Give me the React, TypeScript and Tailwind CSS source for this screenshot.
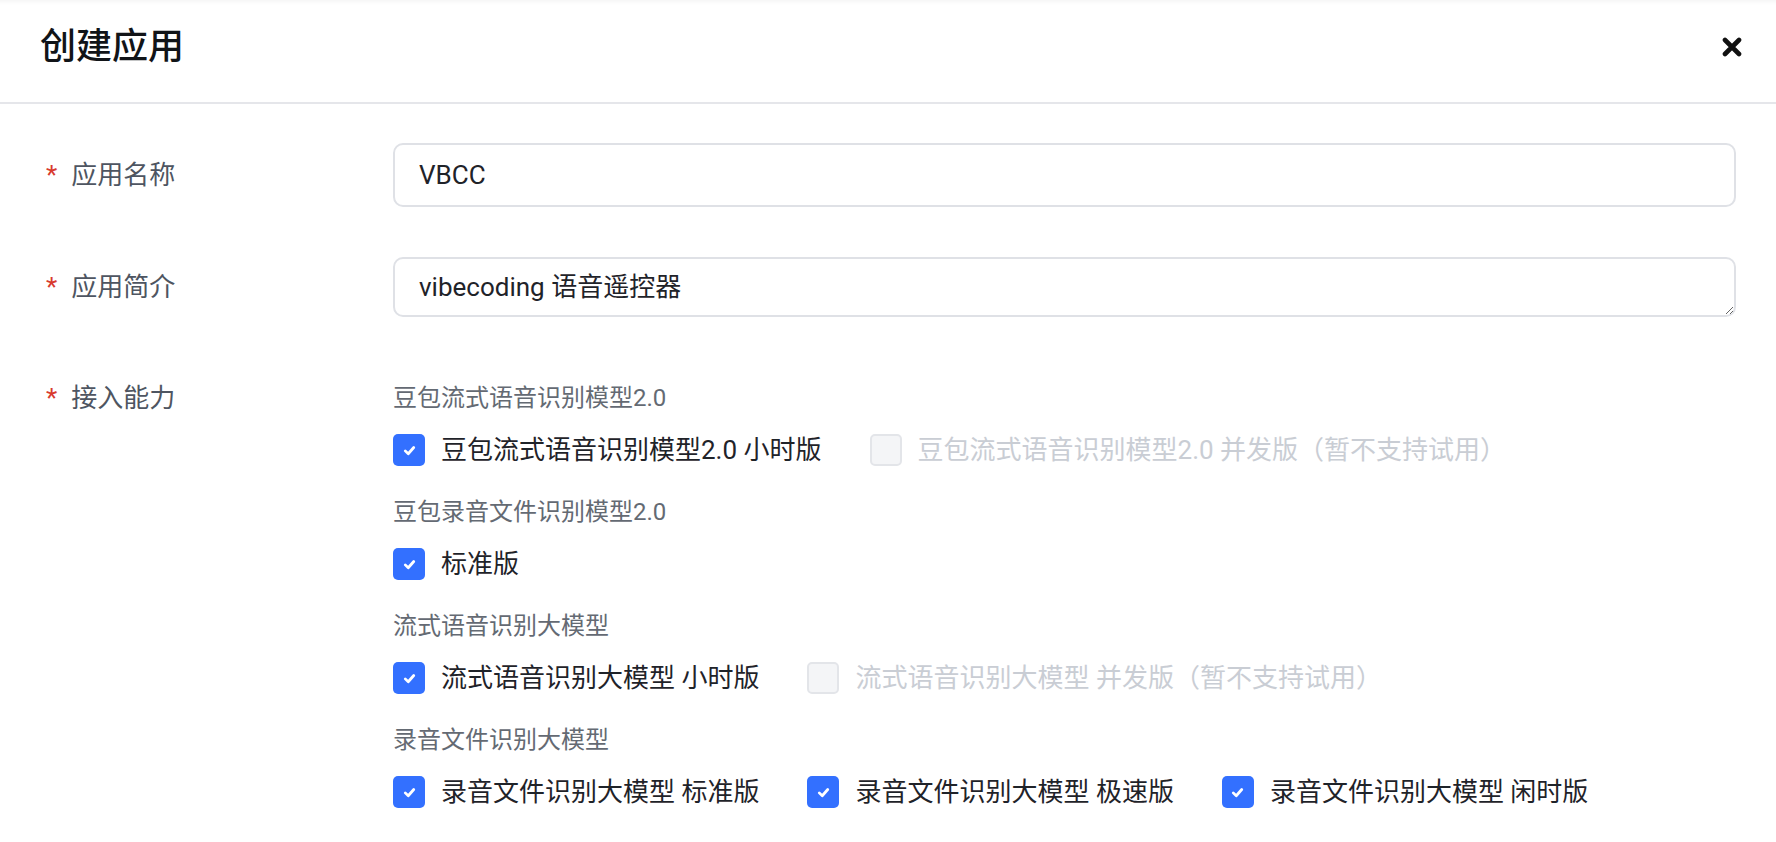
import { useState } from 'react'

type Option = { label: string; checked?: boolean; disabled?: boolean }
type Group = { title: string; options: Option[] }

const initialGroups: Group[] = [
  {
    title: '豆包流式语音识别模型2.0',
    options: [
      { label: '豆包流式语音识别模型2.0 小时版', checked: true },
      { label: '豆包流式语音识别模型2.0 并发版（暂不支持试用）', disabled: true }
    ]
  },
  {
    title: '豆包录音文件识别模型2.0',
    options: [{ label: '标准版', checked: true }]
  },
  {
    title: '流式语音识别大模型',
    options: [
      { label: '流式语音识别大模型 小时版', checked: true },
      { label: '流式语音识别大模型 并发版（暂不支持试用）', disabled: true }
    ]
  },
  {
    title: '录音文件识别大模型',
    options: [
      { label: '录音文件识别大模型 标准版', checked: true },
      { label: '录音文件识别大模型 极速版', checked: true },
      { label: '录音文件识别大模型 闲时版', checked: true }
    ]
  }
]

function CheckBox({ opt, onToggle }: { opt: Option; onToggle: () => void }) {
  return (
    <label className={['flex items-center gap-4 h-10', opt.disabled ? 'cursor-not-allowed' : 'cursor-pointer'].join(' ')}>
      <span
        onClick={opt.disabled ? undefined : onToggle}
        className={[
          'w-8 h-8 rounded-[5px] flex items-center justify-center shrink-0',
          opt.disabled
            ? 'bg-[#f4f5f7] border-2 border-[#e3e5e9]'
            : opt.checked
              ? 'bg-[#3370ff]'
              : 'bg-white border-2 border-[#d0d3d9]'
        ].join(' ')}
      >
        {opt.checked && !opt.disabled && (
          <svg width="15" height="15" viewBox="0 0 12 12" fill="none">
            <path d="M2.6 6.3 L5 8.6 L9.4 3.6" stroke="white" strokeWidth="2.2" strokeLinecap="round" strokeLinejoin="round" />
          </svg>
        )}
      </span>
      <span className={['text-[26px] leading-10', opt.disabled ? 'text-[#c9cdd4]' : 'text-[#1f2329]'].join(' ')}>{opt.label}</span>
    </label>
  )
}

function FieldLabel({ text, h }: { text: string; h: string }) {
  return (
    <div className={['w-[347px] shrink-0 flex items-center text-[26px] text-[#4e5561]', h].join(' ')}>
      <span className="text-[#d83a2e] mr-[14px]">*</span>
      {text}
    </div>
  )
}

export default function App() {
  const [name, setName] = useState('VBCC')
  const [desc, setDesc] = useState('vibecoding 语音遥控器')
  const [groups, setGroups] = useState(initialGroups)

  const toggle = (gi: number, oi: number) => {
    setGroups(groups.map((g, i) => i !== gi ? g : {
      ...g,
      options: g.options.map((o, j) => j === oi ? { ...o, checked: !o.checked } : o)
    }))
  }

  return (
    <div className="min-h-screen bg-white" style={{ fontFamily: 'Roboto, "Noto Sans CJK SC", sans-serif' }}>
      {/* header */}
      <div className="h-[104px] flex items-center justify-between pl-10 pr-[34px] border-b-2 border-[#e5e6ea] shadow-[inset_0_5px_5px_-4px_rgba(0,0,0,0.06)]">
        <h1 className="text-[36px] font-medium text-[#111418] -mt-2">创建应用</h1>
        <button className="w-5 h-5 flex items-center justify-center -mt-2">
          <svg width="20" height="20" viewBox="0 0 20 20" fill="none">
            <path d="M3 3 L17 17 M17 3 L3 17" stroke="#111" strokeWidth="4.6" strokeLinecap="round" />
          </svg>
        </button>
      </div>

      {/* form */}
      <div className="pl-[46px] pr-10 pt-[39px]">
        <div className="flex">
          <FieldLabel text="应用名称" h="h-[64px]" />
          <input
            value={name}
            onChange={e => setName(e.target.value)}
            className="flex-1 h-[64px] px-6 rounded-[10px] border-2 border-[#dfe1e6] text-[26px] text-[#1f2329] outline-none focus:border-[#3370ff]"
          />
        </div>

        <div className="flex mt-[50px]">
          <FieldLabel text="应用简介" h="h-[60px]" />
          <textarea
            value={desc}
            onChange={e => setDesc(e.target.value)}
            className="flex-1 h-[60px] px-6 py-[9px] leading-[38px] rounded-[10px] border-2 border-[#dfe1e6] text-[26px] text-[#1f2329] outline-none focus:border-[#3370ff] resize-y"
          />
        </div>

        <div className="flex mt-[63px]">
          <FieldLabel text="接入能力" h="h-[36px]" />
          <div className="flex-1 flex flex-col gap-6">
            {groups.map((g, gi) => (
              <div key={g.title} className="flex flex-col gap-[14px]">
                <div className="text-[24px] leading-9 text-[#646a73]">{g.title}</div>
                <div className="flex items-center gap-12">
                  {g.options.map((o, oi) => (
                    <CheckBox key={o.label} opt={o} onToggle={() => toggle(gi, oi)} />
                  ))}
                </div>
              </div>
            ))}
          </div>
        </div>
      </div>
    </div>
  )
}
